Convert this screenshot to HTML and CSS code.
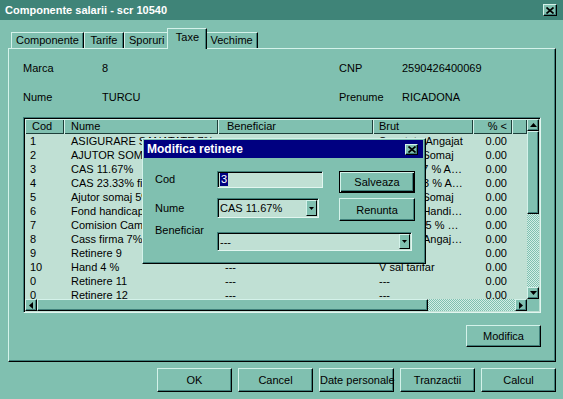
FILE: index.html
```html
<!DOCTYPE html>
<html>
<head>
<meta charset="utf-8">
<link rel="stylesheet" href="styles.css">
</head>
<body>
<div class="window">
  <div class="titlebar">
    <span class="title">Componente salarii - scr 10540</span>
    <span class="xbtn"><svg width="8" height="7" viewBox="0 0 8 7"><path d="M0.5 0.5L7.5 6.5M7.5 0.5L0.5 6.5" stroke="#000" stroke-width="1.7"/></svg></span>
  </div>

  <div class="tabs">
    <div class="tab">Componente</div>
    <div class="tab">Tarife</div>
    <div class="tab">Sporuri</div>
    <div class="tab active">Taxe</div>
    <div class="tab wide">Vechime</div>
  </div>

  <div class="panel">
    <div class="info">
      <span>Marca</span><span>8</span><span>CNP</span><span>2590426400069</span>
      <span>Nume</span><span>TURCU</span><span>Prenume</span><span>RICADONA</span>
    </div>

    <div class="list">
      <div class="list-body">
        <div class="row head">
          <span class="c-cod">Cod</span><span class="c-nume">Nume</span><span class="c-ben">Beneficiar</span><span class="c-brut">Brut</span><span class="c-pct">% &lt;</span><span></span>
        </div>
        <div class="row"><span class="c-cod">1</span><span class="c-nume">ASIGURARE SANATATE 7%</span><span class="c-ben"></span><span class="c-brut">Sanatate Angajat</span><span class="c-pct">0.00</span><span></span></div>
        <div class="row"><span class="c-cod">2</span><span class="c-nume">AJUTOR SOMAJ 1%</span><span class="c-ben"></span><span class="c-brut">Fond de Somaj</span><span class="c-pct">0.00</span><span></span></div>
        <div class="row"><span class="c-cod">3</span><span class="c-nume">CAS 11.67%</span><span class="c-ben"></span><span class="c-brut">Cas 11.67 % Angajat</span><span class="c-pct">0.00</span><span></span></div>
        <div class="row"><span class="c-cod">4</span><span class="c-nume">CAS 23.33% firma</span><span class="c-ben"></span><span class="c-brut">Cas 23.33 % Angajator</span><span class="c-pct">0.00</span><span></span></div>
        <div class="row"><span class="c-cod">5</span><span class="c-nume">Ajutor somaj 5%</span><span class="c-ben"></span><span class="c-brut">Fond de Somaj</span><span class="c-pct">0.00</span><span></span></div>
        <div class="row"><span class="c-cod">6</span><span class="c-nume">Fond handicap</span><span class="c-ben"></span><span class="c-brut">Fond pt. Handicap 4%</span><span class="c-pct">0.00</span><span></span></div>
        <div class="row"><span class="c-cod">7</span><span class="c-nume">Comision Camera</span><span class="c-ben"></span><span class="c-brut">Comis. 0.5 % Camera</span><span class="c-pct">0.00</span><span></span></div>
        <div class="row"><span class="c-cod">8</span><span class="c-nume">Cass firma 7%</span><span class="c-ben"></span><span class="c-brut">CAS 7% Angajator</span><span class="c-pct">0.00</span><span></span></div>
        <div class="row"><span class="c-cod">9</span><span class="c-nume">Retinere 9</span><span class="c-ben"></span><span class="c-brut"></span><span class="c-pct">0.00</span><span></span></div>
        <div class="row"><span class="c-cod">10</span><span class="c-nume">Hand 4 %</span><span class="c-ben">---</span><span class="c-brut">V sal tarifar</span><span class="c-pct">0.00</span><span></span></div>
        <div class="row"><span class="c-cod">0</span><span class="c-nume">Retinere 11</span><span class="c-ben">---</span><span class="c-brut">---</span><span class="c-pct">0.00</span><span></span></div>
        <div class="row"><span class="c-cod">0</span><span class="c-nume">Retinere 12</span><span class="c-ben">---</span><span class="c-brut">---</span><span class="c-pct">0.00</span><span></span></div>
      </div>
      <div class="vscroll">
        <span class="sbtn"><svg width="7" height="4" viewBox="0 0 7 4"><path d="M3.5 0L7 4H0z"/></svg></span>
        <span class="vthumb"></span>
        <span class="track"></span>
        <span class="sbtn"><svg width="7" height="4" viewBox="0 0 7 4"><path d="M0 0H7L3.5 4z"/></svg></span>
      </div>
      <div class="hscroll">
        <span class="sbtn"><svg width="4" height="7" viewBox="0 0 4 7"><path d="M4 0V7L0 3.5z"/></svg></span>
        <span class="hthumb"></span>
        <span class="track"></span>
        <span class="sbtn"><svg width="4" height="7" viewBox="0 0 4 7"><path d="M0 0L4 3.5L0 7z"/></svg></span>
      </div>
      <div class="corner"></div>
    </div>

    <div class="panel-foot">
      <button class="btn">Modifica</button>
    </div>
  </div>

  <div class="actions">
    <button class="btn big">OK</button>
    <button class="btn big">Cancel</button>
    <button class="btn big">Date personale</button>
    <button class="btn big">Tranzactii</button>
    <button class="btn big">Calcul</button>
  </div>

  <div class="dialog">
    <div class="dlg-title">
      <span>Modifica retinere</span>
      <span class="xbtn small"><svg width="8" height="7" viewBox="0 0 8 7"><path d="M0.5 0.5L7.5 6.5M7.5 0.5L0.5 6.5" stroke="#000" stroke-width="1.7"/></svg></span>
    </div>
    <div class="dlg-body">
      <span class="lbl">Cod</span>
      <div class="field f-cod"><span class="sel">3</span></div>
      <button class="btn dbtn default">Salveaza</button>

      <span class="lbl lbl-nume">Nume</span>
      <div class="field f-nume"><span class="val">CAS 11.67%</span><span class="drop"><svg width="5" height="3" viewBox="0 0 5 3"><path d="M0 0H5L2.5 3z"/></svg></span></div>
      <button class="btn dbtn">Renunta</button>

      <span class="lbl lbl-ben">Beneficiar</span>
      <div class="field f-ben"><span class="val">---</span><span class="drop"><svg width="5" height="3" viewBox="0 0 5 3"><path d="M0 0H5L2.5 3z"/></svg></span></div>
    </div>
  </div>
</div>
</body>
</html>
```

FILE: styles.css
```css
* { box-sizing: border-box; margin: 0; padding: 0; }

body {
  margin: 0;
  font-family: "Liberation Sans", Arial, sans-serif;
  font-size: 11px;
  color: #000;
  background: #80c0b0;
}

.window {
  position: relative;
  width: 563px;
  height: 399px;
  background: #80c0b0;
  overflow: hidden;
}

/* ---------- title bar ---------- */
.titlebar {
  height: 20px;
  background: #3f8478;
  display: flex;
  align-items: center;
  justify-content: space-between;
  padding: 0 6px 0 5px;
}
.title {
  color: #fff;
  font-weight: bold;
  font-size: 11px;
}
.xbtn {
  width: 14px;
  height: 12px;
  display: flex;
  align-items: center;
  justify-content: center;
  background: #80c0b0;
  border-top: 1px solid #d4f2ea;
  border-left: 1px solid #d4f2ea;
  border-right: 1px solid #000;
  border-bottom: 1px solid #000;
  box-shadow: inset -1px -1px #40807a;
}
.xbtn.small { width: 13px; height: 11px; }

/* ---------- tabs ---------- */
.tabs {
  display: flex;
  align-items: flex-end;
  height: 20px;
  margin: 8px 0 0 11px;
  position: relative;
  z-index: 1;
}
.tab {
  height: 16px;
  min-width: 40px;
  padding: 0 4px;
  line-height: 15px;
  text-align: center;
  background: #80c0b0;
  border-top: 1px solid #d4f2ea;
  border-left: 1px solid #d4f2ea;
  border-right: 1px solid #000;
  box-shadow: inset -1px 0 #40807a;
  white-space: nowrap;
}
.tab.wide { min-width: 52px; }
.tab.active {
  height: 21px;
  margin: 0 -2px -1px;
  padding-top: 1px;
  line-height: 14px;
  position: relative;
  z-index: 2;
}

/* ---------- panel ---------- */
.panel {
  margin-left: 8px;
  width: 548px;
  height: 314px;
  border-top: 1px solid #d4f2ea;
  border-left: 1px solid #d4f2ea;
  border-right: 1px solid #000;
  border-bottom: 1px solid #000;
  box-shadow: inset -1px -1px #40807a;
  padding: 12px 13px 0 14px;
}
.info {
  display: grid;
  grid-template-columns: 79px 237px 63px auto;
  row-gap: 15px;
  line-height: 14px;
}

/* ---------- list ---------- */
.list {
  margin-top: 13px;
  width: 518px;
  height: 196px;
  border-top: 1px solid #40807a;
  border-left: 1px solid #40807a;
  border-right: 1px solid #e2f6f0;
  border-bottom: 1px solid #e2f6f0;
  padding: 1px;
  box-shadow: inset 1px 1px #000;
  display: grid;
  grid-template-columns: 1fr 12px;
  grid-template-rows: 1fr 12px;
  background: #c0e0d4;
}
.list-body {
  overflow: hidden;
  background: #c0e0d4;
}
.row {
  display: grid;
  grid-template-columns: 39px 154px 155px 100px 39px 15px;
  height: 14px;
  line-height: 14px;
  white-space: nowrap;
}
.row > span {
  overflow: hidden;
  padding-left: 7px;
}
.row .c-cod { padding-left: 5px; }
.row .c-brut {
  padding: 0 9px 0 6px;
  text-overflow: ellipsis;
}
.row .c-pct {
  text-align: right;
  padding: 0 5px 0 0;
}
.row.head {
  height: 15px;
  line-height: 14px;
}
.row.head > span {
  background: #80c0b0;
  box-shadow: inset 1px 1px #d4f2ea, inset -1px -1px #1e3f3a;
}
.row.head .c-cod { padding-left: 7px; }
.row.head .c-ben { padding-left: 9px; }

.vscroll {
  display: flex;
  flex-direction: column;
}
.hscroll {
  display: flex;
}
.sbtn {
  flex: none;
  width: 12px;
  height: 12px;
  display: flex;
  align-items: center;
  justify-content: center;
  background: #80c0b0;
  border-top: 1px solid #d4f2ea;
  border-left: 1px solid #d4f2ea;
  border-right: 1px solid #000;
  border-bottom: 1px solid #000;
  box-shadow: inset -1px -1px #40807a;
}
.vthumb, .hthumb {
  flex: none;
  background: #80c0b0;
  border-top: 1px solid #d4f2ea;
  border-left: 1px solid #d4f2ea;
  border-right: 1px solid #000;
  border-bottom: 1px solid #000;
  box-shadow: inset -1px -1px #40807a;
}
.vthumb { height: 83px; }
.hthumb { width: 391px; }
.track {
  flex: 1;
  background: repeating-conic-gradient(#80c0b0 0% 25%, #d2eee6 0% 50%) 0 0 / 2px 2px;
}
.corner { background: #80c0b0; }

/* ---------- buttons ---------- */
.btn {
  font-family: inherit;
  font-size: 11px;
  color: #000;
  background: #80c0b0;
  border-top: 1px solid #d4f2ea;
  border-left: 1px solid #d4f2ea;
  border-right: 1px solid #000;
  border-bottom: 1px solid #000;
  box-shadow: inset -1px -1px #40807a;
  white-space: nowrap;
  padding: 0;
}
.panel-foot {
  display: flex;
  justify-content: flex-end;
  margin-top: 12px;
  padding-right: 1px;
}
.panel-foot .btn {
  width: 75px;
  height: 22px;
}
.actions {
  display: flex;
  justify-content: flex-end;
  gap: 6px;
  margin-top: 6px;
  padding-right: 7px;
}
.btn.big {
  width: 75px;
  height: 24px;
  overflow: visible;
}

/* ---------- dialog ---------- */
.dialog {
  position: absolute;
  left: 142px;
  top: 138px;
  width: 284px;
  height: 126px;
  background: #80c0b0;
  border-top: 1px solid #d4f2ea;
  border-left: 1px solid #d4f2ea;
  border-right: 1px solid #000;
  border-bottom: 1px solid #000;
  box-shadow: inset -1px -1px #40807a;
  padding: 1px 2px 2px 1px;
  z-index: 5;
}
.dlg-title {
  height: 18px;
  background: #000080;
  color: #fff;
  font-weight: bold;
  font-size: 12px;
  display: flex;
  align-items: center;
  justify-content: space-between;
  padding: 0 5px 0 3px;
}
.dlg-body {
  display: grid;
  grid-template-columns: 62px 106px 16px 76px;
  grid-template-rows: 22px 23px 19px;
  row-gap: 5px;
  padding: 13px 0 0 11px;
}
.dlg-body > :nth-child(7),
.dlg-body > :nth-child(8) { margin-top: 6px; }
.lbl {
  line-height: 17px;
  align-self: start;
}
.lbl-nume { line-height: 20px; }
.lbl-ben { margin-top: -3px !important; line-height: 14px; }

.field {
  align-self: start;
  background: #c0e0d4;
  border-top: 1px solid #40807a;
  border-left: 1px solid #40807a;
  border-right: 1px solid #e2f6f0;
  border-bottom: 1px solid #e2f6f0;
  box-shadow: inset 1px 1px #000;
  display: flex;
  align-items: center;
  padding: 1px 1px 1px 2px;
}
.f-cod { width: 106px; height: 17px; }
.f-nume { width: 102px; height: 20px; }
.f-ben { width: 195px; height: 19px; grid-column: 2 / 5; }
.sel {
  background: #000080;
  color: #fff;
  padding: 0 1px;
  line-height: 13px;
}
.val { flex: 1; white-space: nowrap; overflow: hidden; }
.drop {
  width: 11px;
  align-self: stretch;
  display: flex;
  align-items: center;
  justify-content: center;
  background: #80c0b0;
  border-top: 1px solid #d4f2ea;
  border-left: 1px solid #d4f2ea;
  border-right: 1px solid #000;
  border-bottom: 1px solid #000;
}
.dbtn {
  grid-column: 4;
  width: 76px;
}
.dbtn.default {
  height: 22px;
  border: 1px solid #000;
  box-shadow: inset 1px 1px #d4f2ea, inset -1px -1px #000, inset -2px -2px #40807a;
}
.dbtn:not(.default) { height: 23px; }
```
